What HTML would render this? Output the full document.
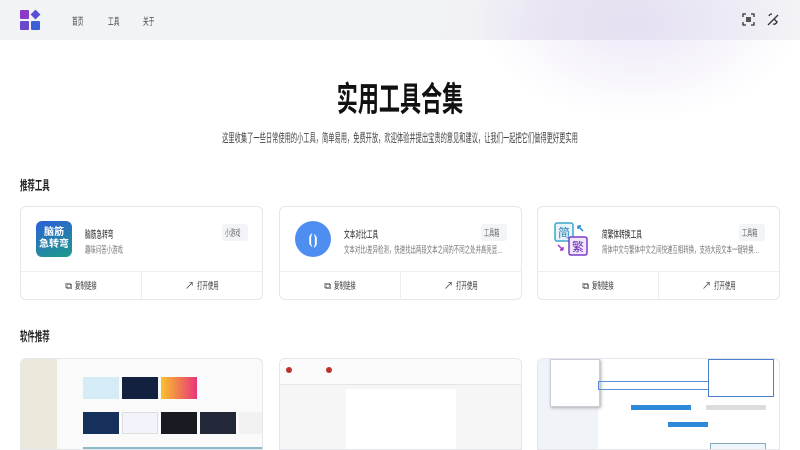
<!DOCTYPE html>
<html><head><meta charset="utf-8"><style>
*{margin:0;padding:0;box-sizing:border-box}
body{width:800px;height:450px;overflow:hidden;background:#fff;font-family:"Liberation Sans","Noto Sans CJK SC",sans-serif;color:#222;position:relative}
.s{display:inline-block;transform:scaleX(.57);transform-origin:left center;white-space:nowrap}
.c{transform-origin:center center}
.hdr{position:absolute;left:0;top:0;width:800px;height:40px;background:linear-gradient(100deg,#f2f3f6 0%,#f2f3f6 55%,#ece9f3 70%,#f0f0f6 85%,#f2f3f6 100%)}
.glow{position:absolute;left:480px;top:0;width:320px;height:120px;background:radial-gradient(ellipse at 50% 20%,rgba(220,210,240,.5),rgba(255,255,255,0) 70%)}
.nav{position:absolute;top:13px;font-size:10px;color:#444}
h1{position:absolute;top:72px;left:0;width:800px;text-align:center;font-size:34px;font-weight:bold;color:#111}
.sub{position:absolute;top:129px;left:0;width:800px;text-align:center;font-size:12px;color:#444}
.sec{position:absolute;left:20px;font-size:13px;font-weight:bold;color:#222}
.card{position:absolute;top:206px;width:243px;height:94px;border:1px solid #e6e7ea;border-radius:6px;background:#fff}
.card .ic{position:absolute;left:15px;top:14px;width:36px;height:36px;border-radius:6px}
.card .t{position:absolute;left:64px;top:19px;font-size:10px;color:#222}
.card .d{position:absolute;left:64px;top:35px;font-size:9.5px;color:#777}
.card .d .s{width:285px;overflow:hidden;text-overflow:ellipsis}
.card .tag{position:absolute;right:14px;top:17px;font-size:9px;color:#666;background:#f2f4f7;padding:2px 3px;border-radius:3px;width:26px;overflow:visible}
.card .ft{position:absolute;left:0;top:64px;width:100%;height:29px;border-top:1px solid #eee;display:flex}
.card .ft div{flex:1;text-align:center;font-size:9.5px;color:#333;line-height:29px}
.card .ft div+div{border-left:1px solid #eee}
.shot{position:absolute;top:358px;width:243px;height:92px;border:1px solid #e6e7ea;border-radius:6px 6px 0 0;overflow:hidden;background:#fff}
</style></head><body>
<div class="hdr"></div><div class="glow"></div>
<svg style="position:absolute;left:20px;top:10px" width="21" height="21" viewBox="0 0 21 21">
<rect x="0" y="0" width="9" height="9" rx="1" fill="#8a3cc8"/><rect x="0" y="11" width="9" height="9" rx="1" fill="#6a48cc"/><rect x="11" y="11" width="9" height="9" rx="1" fill="#3d5fd6"/><rect x="12" y="1" width="7" height="7" transform="rotate(45 15.5 4.5)" fill="#5a4ed2"/></svg>
<div class="nav" style="left:72px"><span class="s">首页</span></div><div class="nav" style="left:108px"><span class="s">工具</span></div><div class="nav" style="left:143px"><span class="s">关于</span></div>
<svg style="position:absolute;left:742px;top:13px" width="13" height="13" viewBox="0 0 13 13" fill="none" stroke="#333" stroke-width="1.3"><path d="M1 4V1h3M9 1h3v3M12 9v3H9M4 12H1V9"/><rect x="4" y="4" width="5" height="5" fill="#555" stroke="none"/></svg>
<svg style="position:absolute;left:766px;top:13px" width="13" height="13" viewBox="0 0 13 13" fill="none" stroke="#333" stroke-width="1.3"><path d="M2 12L12 2M3 3a3 3 0 0 1 3-2M7 11a3 3 0 0 0 4-3M8 6l3 3"/></svg>
<h1><span class="s c" style="transform:scaleX(.62)">实用工具合集</span></h1>
<div class="sub"><span class="s c" style="transform:scaleX(.52)">这里收集了一些日常使用的小工具，简单易用，免费开放，欢迎体验并提出宝贵的意见和建议，让我们一起把它们做得更好更实用</span></div>
<div class="sec" style="top:175px"><span class="s">推荐工具</span></div>
<div class="card" style="left:20px">
<div class="ic" style="background:linear-gradient(160deg,#2d5fd6,#1f9a8a);color:#fff;font-size:10px;font-weight:bold;line-height:12px;text-align:center;padding-top:6px">脑筋<br>急转弯</div>
<div class="t"><span class="s">脑筋急转弯</span></div><div class="d"><span class="s">趣味问答小游戏</span></div><div class="tag"><span class="s">小游戏</span></div>
<div class="ft"><div>⧉ <span class="s" style="width:22px">复制链接</span></div><div>↗ <span class="s" style="width:22px">打开使用</span></div></div></div>
<div class="card" style="left:279px">
<div class="ic" style="background:#4d8ef0;border-radius:50%;color:#fff;text-align:center;line-height:36px;font-size:14px">⦗⦘</div>
<div class="t"><span class="s">文本对比工具</span></div><div class="d"><span class="s">文本对比/差异检测，快速找出两段文本之间的不同之处并高亮显示出来方便查看</span></div><div class="tag"><span class="s">工具箱</span></div>
<div class="ft"><div>⧉ <span class="s" style="width:22px">复制链接</span></div><div>↗ <span class="s" style="width:22px">打开使用</span></div></div></div>
<div class="card" style="left:537px">
<div class="ic"><svg width="36" height="36" viewBox="0 0 36 36"><rect x="2" y="2" width="18" height="18" rx="2" fill="#e8f4fb" stroke="#3aa7c8" stroke-width="1.5"/><text x="11" y="16" font-size="12" text-anchor="middle" fill="#2a7fb0" font-family="Noto Sans CJK SC">简</text><rect x="16" y="16" width="18" height="18" rx="2" fill="#f1e8fb" stroke="#7a3cc8" stroke-width="1.5"/><text x="25" y="30" font-size="12" text-anchor="middle" fill="#6a2cb8" font-family="Noto Sans CJK SC">繁</text><path d="M30 10l-5-5M25 5v3M25 5h3" stroke="#2a8fd0" stroke-width="1.5" fill="none"/><path d="M5 24l5 5M10 29v-3M10 29H7" stroke="#a03cc8" stroke-width="1.5" fill="none"/></svg></div>
<div class="t"><span class="s">简繁体转换工具</span></div><div class="d"><span class="s">简体中文与繁体中文之间快速互相转换，支持大段文本一键转换处理非常方便</span></div><div class="tag"><span class="s">工具箱</span></div>
<div class="ft"><div>⧉ <span class="s" style="width:22px">复制链接</span></div><div>↗ <span class="s" style="width:22px">打开使用</span></div></div></div>
<div class="sec" style="top:326px"><span class="s">软件推荐</span></div>
<div class="shot" style="left:20px;background:#fafafa">
<div style="position:absolute;left:0;top:0;width:36px;height:92px;background:#ede8dc"></div>
<div style="position:absolute;left:62px;top:18px;width:36px;height:22px;background:#d5ebf6"></div>
<div style="position:absolute;left:101px;top:18px;width:36px;height:22px;background:#132140"></div>
<div style="position:absolute;left:140px;top:18px;width:36px;height:22px;background:linear-gradient(90deg,#f9c22a,#e8347a)"></div>
<div style="position:absolute;left:62px;top:53px;width:36px;height:22px;background:#15305a"></div>
<div style="position:absolute;left:101px;top:53px;width:36px;height:22px;background:#f3f3fb;border:1px solid #ddd"></div>
<div style="position:absolute;left:140px;top:53px;width:36px;height:22px;background:#1a1a22"></div>
<div style="position:absolute;left:179px;top:53px;width:36px;height:22px;background:#222838"></div>
<div style="position:absolute;left:218px;top:53px;width:36px;height:22px;background:#f2f2f2"></div>
<div style="position:absolute;left:62px;top:88px;width:190px;height:6px;background:#8cb8c8"></div>
</div>
<div class="shot" style="left:279px;background:#f6f6f6">
<div style="position:absolute;left:0;top:0;width:243px;height:26px;background:#fbfbfb;border-bottom:1px solid #e5e5e5"></div>
<div style="position:absolute;left:6px;top:8px;width:6px;height:6px;border-radius:50%;background:#c0302a"></div>
<div style="position:absolute;left:46px;top:8px;width:6px;height:6px;border-radius:50%;background:#c0302a"></div>
<div style="position:absolute;left:66px;top:30px;width:110px;height:62px;background:#fff"></div>
</div>
<div class="shot" style="left:537px;background:#fff">
<div style="position:absolute;left:0;top:0;width:60px;height:92px;background:#f0f3f8"></div>
<div style="position:absolute;left:12px;top:0;width:50px;height:48px;background:#fff;border:1px solid #ccd;box-shadow:1px 1px 3px #aaa"></div>
<div style="position:absolute;left:60px;top:22px;width:170px;height:9px;border:1px solid #5b8ed8"></div>
<div style="position:absolute;left:170px;top:0;width:66px;height:38px;background:#fff;border:1px solid #4a7fd0"></div>
<div style="position:absolute;left:93px;top:46px;width:60px;height:5px;background:#2e8ad8"></div>
<div style="position:absolute;left:168px;top:46px;width:60px;height:5px;background:#ddd"></div>
<div style="position:absolute;left:130px;top:63px;width:40px;height:5px;background:#2e8ad8"></div>
<div style="position:absolute;left:172px;top:84px;width:56px;height:8px;border:1px solid #8ab;background:#eef4fb"></div>
</div>
</body></html>
